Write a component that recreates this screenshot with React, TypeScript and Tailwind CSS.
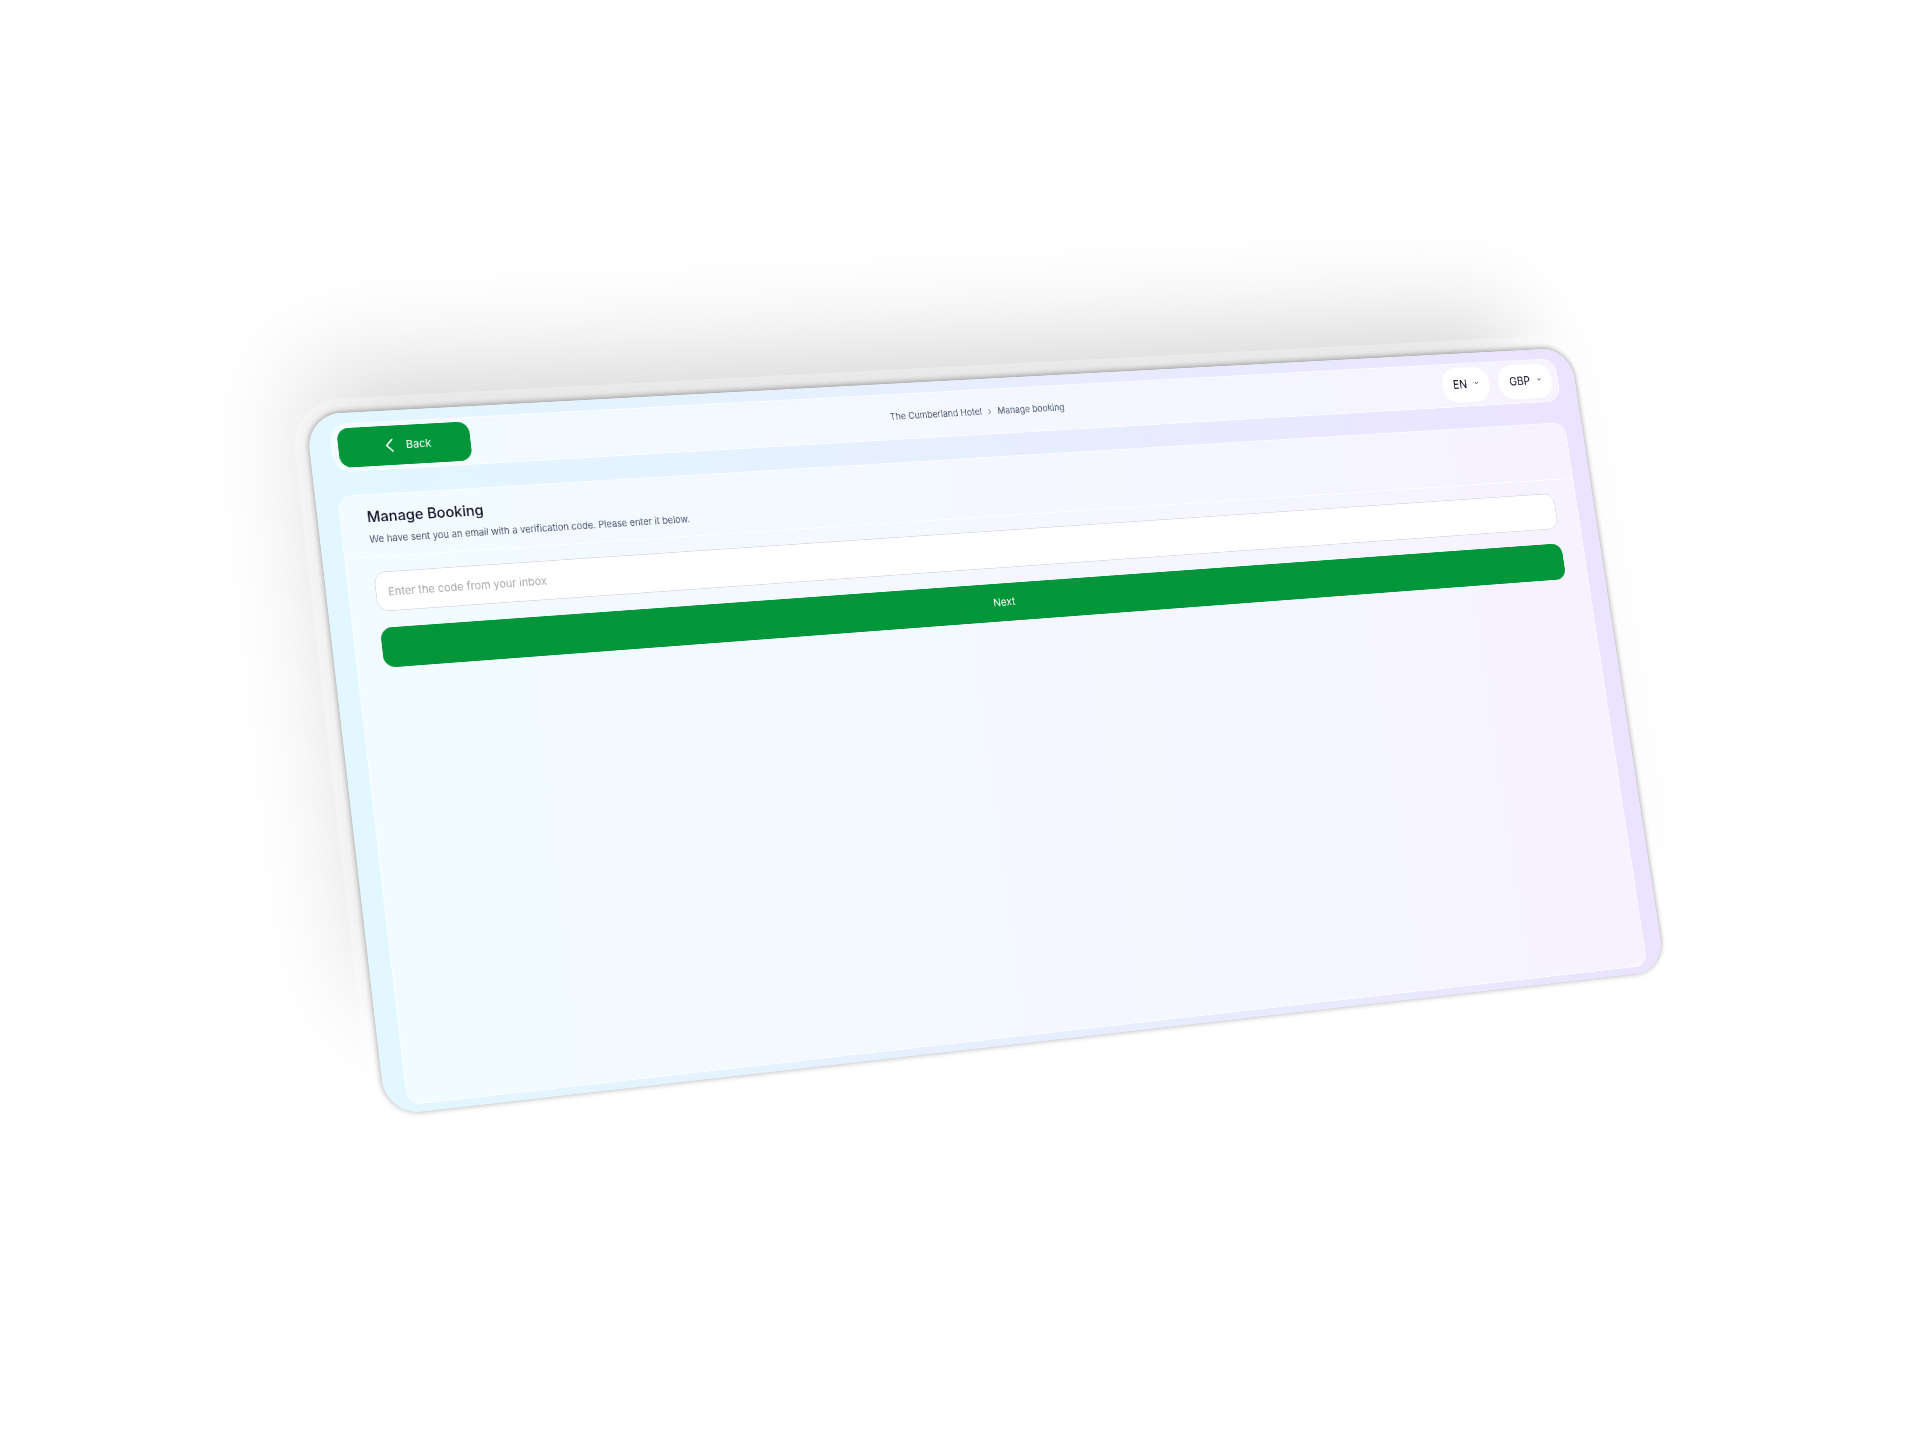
import { ChevronDown, ChevronLeft, ChevronRight } from "lucide-react";

function PillSelect({ label, value }: { label: string; value: string }) {
  return (
    <div className="relative">
      <select
        aria-label={label}
        defaultValue={value}
        className="h-[52px] appearance-none rounded-3xl bg-white pr-9 pl-[18px] text-[17px] text-[#14142b]"
      >
        <option>{value}</option>
      </select>
      <ChevronDown size={10} strokeWidth={2} className="pointer-events-none absolute top-[46%] right-4 -translate-y-1/2 text-[#14142b]" />
    </div>
  );
}

export default function App() {
  return (
    <div className="h-screen overflow-hidden bg-white font-['Inter',sans-serif]">
      <main className="flex min-h-[940px] w-full origin-top-left flex-col gap-8 rounded-[48px] bg-linear-to-r from-[#e2f7ff] via-[#e7eeff] to-[#ebe3ff] pt-[15px] pr-7 pb-2.5 pl-[30px] [box-shadow:0_-1px_8px_rgba(0,0,0,0.4),0_0_0_20px_rgba(255,255,255,0.24),-40px_-100px_140px_-50px_rgba(0,0,0,0.17)] [transform:matrix3d(0.75656,-0.013333,0,0.0000625,0.076809,0.720745,0,-0.00002223,0,0,1,0,305.6,414.8,0,1)]">
        <header className="grid grid-cols-[1fr_auto_1fr] items-center rounded-3xl border border-white bg-white/55 py-[5px] pr-2.5 pl-2 backdrop-blur-sm">
          <button className="flex h-[54px] w-[182px] items-center justify-center gap-1.5 rounded-2xl bg-[#009639] text-[15px] text-white">
            <ChevronLeft size={32} strokeWidth={1.5} />
            Back
          </button>
          <nav className="flex items-center gap-1.5 text-[13px] text-[#4e5b70]">
            <a href="#hotel">The Cumberland Hotel</a>
            <ChevronRight size={12} />
            <span>Manage booking</span>
          </nav>
          <div className="flex justify-end gap-4">
            <PillSelect label="Language" value="EN" />
            <PillSelect label="Currency" value="GBP" />
          </div>
        </header>
        <section className="flex-1 rounded-[20px] border border-white bg-white/55 backdrop-blur-sm">
          <div className="flex flex-col gap-1.5 border-b border-white px-9 pt-4 pb-3.5">
            <h1 className="text-xl font-medium text-[#14142b]">Manage Booking</h1>
            <p className="text-[13px] leading-5 text-[#4e5b70]">
              We have sent you an email with a verification code. Please enter it below.
            </p>
          </div>
          <form className="flex flex-col gap-[22px] px-9 pt-5 pb-9">
            <input
              aria-label="Verification code"
              placeholder="Enter the code from your inbox"
              className="h-[54px] rounded-2xl border border-[#d9d8e4] bg-white px-4 text-[15px] placeholder:text-[#a9a9a9]"
            />
            <button type="button" className="h-[54px] rounded-2xl bg-[#009639] text-[15px] text-white">
              Next
            </button>
          </form>
        </section>
      </main>
    </div>
  );
}
